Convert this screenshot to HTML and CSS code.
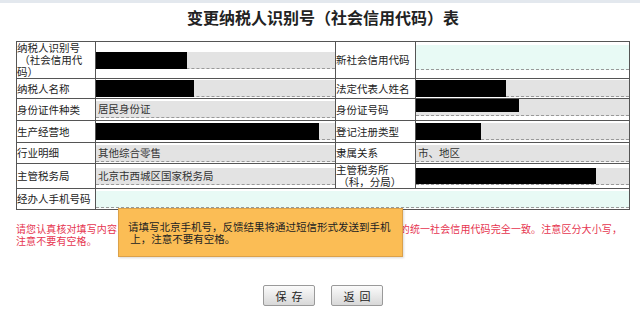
FILE: index.html
```html
<!DOCTYPE html>
<html lang="zh-CN">
<head>
    <meta charset="UTF-8">
    <title>变更纳税人识别号（社会信用代码）表</title>
    <link rel="stylesheet" href="styles.css">
</head>
<body>
    <div class="topbar"></div>
    <h1 class="title">变更纳税人识别号（社会信用代码）表</h1>

    <table class="form-table">
        <colgroup>
            <col class="col-label">
            <col class="col-value">
            <col class="col-label2">
            <col class="col-value2">
        </colgroup>
        <tr class="r1">
            <td class="label">纳税人识别号<br>&nbsp;（社会信用代<br>码）</td>
            <td class="value"><div class="field"><span class="mask m-id"></span></div></td>
            <td class="label">新社会信用代码</td>
            <td class="value"><div class="field field-edit tall"></div></td>
        </tr>
        <tr class="r2">
            <td class="label">纳税人名称</td>
            <td class="value"><div class="field"><span class="mask m-name"></span></div></td>
            <td class="label">法定代表人姓名</td>
            <td class="value"><div class="field"><span class="mask m-rep"></span></div></td>
        </tr>
        <tr class="r3">
            <td class="label">身份证件种类</td>
            <td class="value"><div class="field">居民身份证</div></td>
            <td class="label">身份证号码</td>
            <td class="value top"><div class="field"><span class="mask m-idno"></span></div></td>
        </tr>
        <tr class="r4">
            <td class="label">生产经营地</td>
            <td class="value"><div class="field"><span class="mask m-addr"></span></div></td>
            <td class="label">登记注册类型</td>
            <td class="value"><div class="field"><span class="mask m-type"></span></div></td>
        </tr>
        <tr class="r5">
            <td class="label">行业明细</td>
            <td class="value"><div class="field">其他综合零售</div></td>
            <td class="label">隶属关系</td>
            <td class="value"><div class="field">市、地区</div></td>
        </tr>
        <tr class="r6">
            <td class="label">主管税务局</td>
            <td class="value"><div class="field">北京市西城区国家税务局</div></td>
            <td class="label">主管税务所<br>&nbsp;（科，分局）</td>
            <td class="value"><div class="field"><span class="mask m-office"></span></div></td>
        </tr>
        <tr class="r7">
            <td class="label">经办人手机号码</td>
            <td class="value" colspan="3"><div class="field field-edit"></div></td>
        </tr>
    </table>

    <p class="note">请您认真核对填写内容，确保填写的新社会信用代码与营业执照（或登记证书）上所载的统一社会信用代码完全一致。注意区分大小写，<br>注意不要有空格。</p>

    <div class="actions">
        <button class="btn">保存</button>
        <button class="btn">返回</button>
    </div>

    <div class="tip">请填写北京手机号，反馈结果将通过短信形式发送到手机<br>&nbsp;上，注意不要有空格。</div>
</body>
</html>
```

FILE: styles.css
```css
body {
    margin: 0;
    background-color: #fff;
    font-family: "Noto Sans CJK SC", sans-serif;
    font-size: 10.5px;
    color: #222;
    position: relative;
}

.topbar {
    height: 3px;
    background-color: #e3e8ee;
}

.title {
    margin: 0;
    height: 38px;
    box-sizing: border-box;
    padding: 4px 0 0 6px;
    text-align: center;
    font-size: 16px;
    line-height: 20px;
    font-weight: bold;
    color: #222;
}

.form-table {
    margin-left: 16px;
    width: 614px;
    table-layout: fixed;
    border-collapse: collapse;
    border: 1px solid #555;
}

.col-label { width: 79px; }
.col-value { width: 240px; }
.col-label2 { width: 80px; }
.col-value2 { width: 214px; }

.form-table td {
    border: 1px solid #555;
    padding: 0;
    vertical-align: middle;
}

.r1 td { height: 36px; }
.r2 td { height: 19px; }
.r3 td { height: 21px; }
.r4 td { height: 21px; }
.r5 td { height: 20px; }
.r6 td { height: 23px; }
.r7 td { height: 20px; }

.label {
    background-color: #fff;
    line-height: 12px;
    white-space: nowrap;
    overflow: hidden;
}

.value {
    background-color: #fff;
}

.value.top {
    vertical-align: top;
}

.field {
    height: 17px;
    box-sizing: border-box;
    padding-left: 2px;
    background-color: #e3e3e3;
    border-bottom: 1px dashed #999;
    line-height: 16px;
    color: #333;
    white-space: nowrap;
}

.field-edit {
    background-color: #e8faf5;
}

.field-edit.tall {
    height: 25px;
    margin-bottom: 6px;
}

.mask {
    display: inline-block;
    height: 17px;
    margin-left: -2px;
    background-color: #000;
    vertical-align: top;
}

.m-id { width: 91px; }
.m-name { width: 98px; }
.m-rep { width: 90px; }
.m-idno { width: 103px; height: 13px; }
.m-addr { width: 223px; }
.m-type { width: 65px; }
.m-office { width: 180px; height: 16px; }

.note {
    margin: 13px 0 0 16px;
    color: #e6354f;
    font-size: 10px;
    letter-spacing: 0.1px;
    line-height: 12px;
    white-space: nowrap;
}

.actions {
    display: flex;
    justify-content: center;
    gap: 16px;
    margin-top: 38px;
    padding-left: 6px;
}

.btn {
    width: 52px;
    height: 21px;
    padding: 0;
    border: 1px solid #9a9a9a;
    border-radius: 2px;
    background: linear-gradient(#fbfbfb, #d8d8d8);
    font-family: "Noto Sans CJK SC", sans-serif;
    font-size: 11px;
    letter-spacing: 5px;
    text-indent: 5px;
    color: #222;
}

.tip {
    position: absolute;
    left: 118px;
    top: 208px;
    width: 285px;
    height: 49px;
    box-sizing: border-box;
    padding: 12px 0 0 9px;
    background-color: #fbbd55;
    border: 1px solid #dba14a;
    box-shadow: 1px 1px 2px rgba(0, 0, 0, 0.15);
    line-height: 12px;
    color: #222;
}
```
